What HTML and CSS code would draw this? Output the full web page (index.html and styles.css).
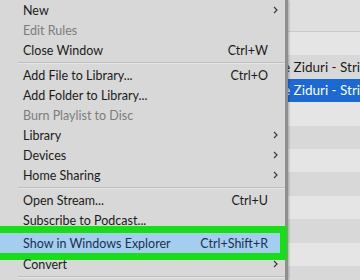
FILE: index.html
```html
<!DOCTYPE html>
<html lang="en">
<head>
  <meta charset="UTF-8" />
  <meta name="viewport" content="width=device-width, initial-scale=1.0" />
  <title>File menu</title>
  <link rel="stylesheet" href="styles.css">
</head>
<body>
  <div class="window">
    <div class="songs">
      <div class="songs-head"></div>
      <div class="song"></div>
      <div class="song dark"><span>e Ziduri - Strigăt</span></div>
      <div class="song selected"><span>e Ziduri - Strigăt</span></div>
      <div class="song"></div>
      <div class="song dark"></div>
      <div class="song"></div>
      <div class="song dark"></div>
      <div class="song"></div>
      <div class="song dark"></div>
      <div class="song"></div>
      <div class="song dark"></div>
    </div>

    <div class="menu">
      <div class="item"><span>New</span><span></span><span class="arrow"><svg width="5" height="8" viewBox="0 0 5 8"><polyline points="1,1 4,4 1,7" /></svg></span></div>
      <div class="item disabled"><span>Edit Rules</span><span></span><span></span></div>
      <div class="item"><span>Close Window</span><span class="key">Ctrl+W</span><span></span></div>
      <div class="sep"></div>
      <div class="item"><span>Add File to Library...</span><span class="key">Ctrl+O</span><span></span></div>
      <div class="item"><span>Add Folder to Library...</span><span></span><span></span></div>
      <div class="item disabled"><span>Burn Playlist to Disc</span><span></span><span></span></div>
      <div class="item"><span>Library</span><span></span><span class="arrow"><svg width="5" height="8" viewBox="0 0 5 8"><polyline points="1,1 4,4 1,7" /></svg></span></div>
      <div class="item"><span>Devices</span><span></span><span class="arrow"><svg width="5" height="8" viewBox="0 0 5 8"><polyline points="1,1 4,4 1,7" /></svg></span></div>
      <div class="item"><span>Home Sharing</span><span></span><span class="arrow"><svg width="5" height="8" viewBox="0 0 5 8"><polyline points="1,1 4,4 1,7" /></svg></span></div>
      <div class="sep"></div>
      <div class="item"><span>Open Stream...</span><span class="key">Ctrl+U</span><span></span></div>
      <div class="item"><span>Subscribe to Podcast...</span><span></span><span></span></div>
      <div class="item active"><span>Show in Windows Explorer</span><span class="key">Ctrl+Shift+R</span><span></span></div>
      <div class="item convert"><span>Convert</span><span></span><span class="arrow"><svg width="5" height="8" viewBox="0 0 5 8"><polyline points="1,1 4,4 1,7" /></svg></span></div>
      <div class="sep"></div>
    </div>
  </div>
</body>
</html>
```

FILE: styles.css
```css
* { box-sizing: border-box; }
body {
  margin: 0;
  font-family: Lato, "Liberation Sans", sans-serif;
  background: #dcdcdc;
  overflow: hidden;
}
.window {
  position: relative;
  width: 360px;
  height: 280px;
  overflow: hidden;
}

/* song list behind the menu */
.songs {
  display: flex;
  flex-direction: column;
}
.songs-head {
  height: 32px;
  background: #dfdfdf;
  border-bottom: 1px solid #cacaca;
}
.song {
  height: 23.4px;
  flex-shrink: 0;
  background: #e5e5e5;
  padding-left: 283px;
  display: flex;
  align-items: center;
  font-size: 13.5px;
  color: #1c1c1c;
  white-space: nowrap;
}
.song.dark { background: #d8d8d8; }
.song.selected {
  background: #1b69d6;
  color: #fff;
}

/* file menu */
.menu {
  position: absolute;
  top: 0;
  left: 0;
  width: 288px;
  height: 280px;
  background: #d8d8d8;
  border-right: 3px solid #8f8f8f;
  box-shadow: 1px 0 2px rgba(0, 0, 0, 0.25);
  color: #1b1b1b;
  font-size: 12.5px;
}
.item {
  position: relative;
  height: 20px;
  padding-left: 23px;
  display: grid;
  grid-template-columns: 1fr auto 17px;
  align-items: center;
}
.item.disabled { color: #7c7c7c; }
.key { text-align: right; }
.arrow {
  display: flex;
  padding-left: 5px;
}
.arrow svg {
  fill: none;
  stroke: #3a3a3a;
  stroke-width: 1.2;
}
.sep {
  margin: 2px 0 1px 18px;
  border-top: 1px solid #bdbdbd;
  border-bottom: 1px solid #e6e6e6;
}

.item.active {
  margin: 3px 5px 0 0;
  background: #a5cdf0;
  color: #1a3150;
  grid-template-columns: 1fr auto 12px;
}
.item.active::after {
  content: "";
  position: absolute;
  top: -7px;
  bottom: -7px;
  left: -20px;
  right: -7px;
  border: 7px solid #14e014;
}
.item.convert { margin-top: 1px; }
```
